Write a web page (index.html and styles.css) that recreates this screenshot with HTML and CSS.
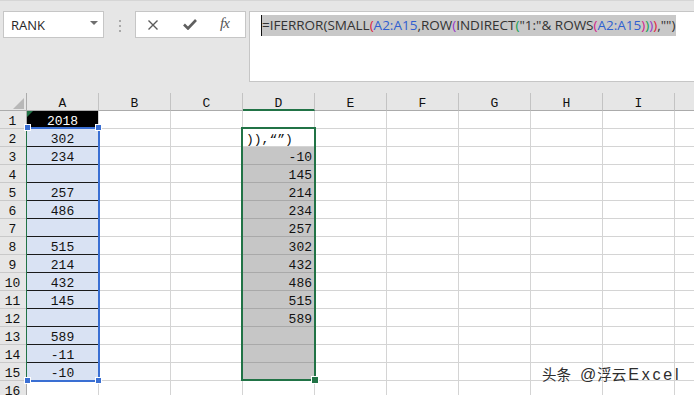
FILE: index.html
```
<!DOCTYPE html>
<html>
<head>
<meta charset="utf-8">
<link rel="stylesheet" href="styles.css">
</head>
<body>
<div class="toolbar">
  <div class="namebox"><span class="name">RANK</span><span class="caret"></span></div>
  <div class="dots"><i></i><i></i><i></i></div>
  <div class="btns">
    <svg class="ico-x" width="10" height="10" viewBox="0 0 10 10"><path d="M0.5 0.5L9.5 9.5M9.5 0.5L0.5 9.5" stroke="#5a5a5a" stroke-width="1.4" fill="none"/></svg>
    <svg class="ico-ok" width="14" height="11" viewBox="0 0 14 11"><path d="M1 5.5L5 9.5L13 1" stroke="#5f5f5f" stroke-width="2.6" fill="none"/></svg>
    <span class="fx">fx</span>
  </div>
  <div class="fbar"><span class="sel"><span class="cur"></span>=IFERROR(SMALL<span class="p1">(</span><span class="r">A2:A15</span>,ROW<span class="p2">(</span>INDIRECT<span class="p3">(</span>"1:"&amp; ROWS<span class="p4">(</span><span class="r">A2:A15</span><span class="p4">)</span><span class="p3">)</span><span class="p2">)</span><span class="p1">)</span>,"")</span></div>
</div>
<div class="sheet">
  <div class="corner"><i></i></div><div class="ch">A</div><div class="ch">B</div><div class="ch">C</div><div class="ch dsel">D</div><div class="ch">E</div><div class="ch">F</div><div class="ch">G</div><div class="ch">H</div><div class="ch">I</div><div class="ch j"></div>

  <div class="rh">1</div><div class="c a1">2018</div><div class="c"></div><div class="c"></div><div class="c"></div><div class="c"></div><div class="c"></div><div class="c"></div><div class="c"></div><div class="c"></div><div class="c j"></div>
  <div class="rh">2</div><div class="c a">302</div><div class="c"></div><div class="c"></div><div class="c d2">)),“”)</div><div class="c"></div><div class="c"></div><div class="c"></div><div class="c"></div><div class="c"></div><div class="c j"></div>
  <div class="rh">3</div><div class="c a">234</div><div class="c"></div><div class="c"></div><div class="c d">-10</div><div class="c"></div><div class="c"></div><div class="c"></div><div class="c"></div><div class="c"></div><div class="c j"></div>
  <div class="rh">4</div><div class="c a"></div><div class="c"></div><div class="c"></div><div class="c d">145</div><div class="c"></div><div class="c"></div><div class="c"></div><div class="c"></div><div class="c"></div><div class="c j"></div>
  <div class="rh">5</div><div class="c a">257</div><div class="c"></div><div class="c"></div><div class="c d">214</div><div class="c"></div><div class="c"></div><div class="c"></div><div class="c"></div><div class="c"></div><div class="c j"></div>
  <div class="rh">6</div><div class="c a">486</div><div class="c"></div><div class="c"></div><div class="c d">234</div><div class="c"></div><div class="c"></div><div class="c"></div><div class="c"></div><div class="c"></div><div class="c j"></div>
  <div class="rh">7</div><div class="c a"></div><div class="c"></div><div class="c"></div><div class="c d">257</div><div class="c"></div><div class="c"></div><div class="c"></div><div class="c"></div><div class="c"></div><div class="c j"></div>
  <div class="rh">8</div><div class="c a">515</div><div class="c"></div><div class="c"></div><div class="c d">302</div><div class="c"></div><div class="c"></div><div class="c"></div><div class="c"></div><div class="c"></div><div class="c j"></div>
  <div class="rh">9</div><div class="c a">214</div><div class="c"></div><div class="c"></div><div class="c d">432</div><div class="c"></div><div class="c"></div><div class="c"></div><div class="c"></div><div class="c"></div><div class="c j"></div>
  <div class="rh">10</div><div class="c a">432</div><div class="c"></div><div class="c"></div><div class="c d">486</div><div class="c"></div><div class="c"></div><div class="c"></div><div class="c"></div><div class="c"></div><div class="c j"></div>
  <div class="rh">11</div><div class="c a">145</div><div class="c"></div><div class="c"></div><div class="c d">515</div><div class="c"></div><div class="c"></div><div class="c"></div><div class="c"></div><div class="c"></div><div class="c j"></div>
  <div class="rh">12</div><div class="c a"></div><div class="c"></div><div class="c"></div><div class="c d">589</div><div class="c"></div><div class="c"></div><div class="c"></div><div class="c"></div><div class="c"></div><div class="c j"></div>
  <div class="rh">13</div><div class="c a">589</div><div class="c"></div><div class="c"></div><div class="c d"></div><div class="c"></div><div class="c"></div><div class="c"></div><div class="c"></div><div class="c"></div><div class="c j"></div>
  <div class="rh">14</div><div class="c a">-11</div><div class="c"></div><div class="c"></div><div class="c d"></div><div class="c"></div><div class="c"></div><div class="c"></div><div class="c"></div><div class="c"></div><div class="c j"></div>
  <div class="rh">15</div><div class="c a">-10</div><div class="c"></div><div class="c"></div><div class="c d"></div><div class="c"></div><div class="c"></div><div class="c"></div><div class="c"></div><div class="c"></div><div class="c j"></div>
  <div class="rh">16</div><div class="c"></div><div class="c"></div><div class="c"></div><div class="c"></div><div class="c"></div><div class="c"></div><div class="c"></div><div class="c"></div><div class="c"></div><div class="c j"></div>

  <div class="range-blue"></div>
  <div class="hb tl"></div><div class="hb tr"></div><div class="hb bl"></div><div class="hb br"></div>
  <div class="range-green"></div>
  <div class="hg"></div>
</div>
<div class="watermark"><span class="cjk">头条</span><span class="at">@</span><span class="cjk">浮云</span><span class="lat">Excel</span></div>
</body>
</html>
```
FILE: styles.css
```
html, body {
  margin: 0;
  padding: 0;
  width: 694px;
  height: 395px;
  overflow: hidden;
  background: #fff;
}
body {
  position: relative;
  font-family: "Liberation Mono", monospace;
}
.toolbar {
  box-sizing: border-box;
  height: 93px;
  background: #e6e6e6;
  border-top: 1px solid #d6d6d6;
  padding: 10px 0 0 3px;
  display: flex;
  align-items: flex-start;
}
.namebox {
  box-sizing: border-box;
  width: 101px;
  height: 27px;
  background: #fff;
  border: 1px solid #c6c6c6;
  display: flex;
  align-items: center;
  justify-content: space-between;
  padding: 0 5px 0 7px;
}
.name {
  font-family: "Open Sans", sans-serif;
  font-size: 13px;
  color: #262626;
}
.caret {
  width: 0;
  height: 0;
  border-left: 4px solid transparent;
  border-right: 4px solid transparent;
  border-top: 4px solid #6f6f6f;
  margin-bottom: 3px;
}
.dots {
  margin: 9px 0 0 15px;
  width: 2px;
  display: flex;
  flex-direction: column;
  gap: 3px;
}
.dots i {
  display: block;
  width: 2px;
  height: 2px;
  background: #a9a9a9;
}
.btns {
  box-sizing: border-box;
  margin-left: 14px;
  width: 111px;
  height: 27px;
  background: #fff;
  border: 1px solid #c6c6c6;
  display: flex;
  align-items: center;
  padding-left: 12px;
}
.ico-x { margin-right: 25px; }
.ico-ok { margin-right: 23px; }
.fx {
  font-family: "Liberation Serif", serif;
  font-style: italic;
  font-size: 15px;
  color: #555;
  letter-spacing: -1px;
  margin-top: -2px;
}
.fbar {
  box-sizing: border-box;
  margin-left: 3px;
  flex: 1;
  height: 71px;
  background: #fff;
  border: 1px solid #c6c6c6;
  border-right: none;
  padding: 3px 0 0 11px;
}
.sel {
  display: inline-block;
  position: relative;
  background: #c8c8c8;
  height: 21px;
  line-height: 21px;
  padding-left: 1px;
  padding-right: 1px;
  font-family: "Open Sans", sans-serif;
  font-size: 13.5px;
  color: #333;
  white-space: nowrap;
}
.cur {
  display: inline-block;
  width: 1px;
  height: 21px;
  background: #111;
  vertical-align: top;
  margin-left: -1px;
}
.r { color: #2f5fd0; }
.p1 { color: #e0213a; }
.p2 { color: #9a35c8; }
.p3 { color: #13a04e; }
.p4 { color: #d4188a; }

.sheet {
  position: relative;
  display: grid;
  grid-template-columns: 27px repeat(9, 72px) 21px;
  grid-auto-rows: 18px;
  height: 302px;
  overflow: hidden;
  background: #fff;
}
.sheet > div {
  box-sizing: border-box;
  font-size: 13px;
  line-height: 22px;
  white-space: nowrap;
  color: #111;
}
.corner {
  background: #e6e6e6;
  border-right: 1px solid #ababab;
  border-bottom: 1px solid #ababab;
  display: flex;
  justify-content: flex-end;
  align-items: flex-end;
  padding: 0 2px 1px 0;
}
.corner i {
  display: block;
  width: 0;
  height: 0;
  border-left: 11px solid transparent;
  border-bottom: 11px solid #b8b8b8;
}
.ch {
  background: #e6e6e6;
  border-right: 1px solid #c3c3c3;
  border-bottom: 1px solid #ababab;
  text-align: center;
  color: #222;
}
.ch.dsel {
  border-bottom: 2px solid #217346;
}
.ch.j { border-right: none; }
.rh {
  background: #e6e6e6;
  border-right: 1px solid #ababab;
  border-bottom: 1px solid #c9c9c9;
  text-align: center;
  padding-right: 1px;
  color: #222;
}
.c {
  border-right: 1px solid #d4d4d4;
  border-bottom: 1px solid #d4d4d4;
}
.c.j { border-right: none; }
.a1 {
  position: relative;
  background: #000;
  color: #fff !important;
  text-align: center;
}
.a1::before {
  content: "";
  position: absolute;
  left: 0;
  top: 0;
  border-top: 6px solid #217346;
  border-right: 6px solid transparent;
}
.a {
  background: #d9e2f3;
  border-bottom: 1px solid #1a1a1a;
  text-align: center;
}
.d2 {
  background: #fff;
  padding-left: 3px;
}
.d {
  background: #c6c6c6;
  border-bottom: 1px solid #a9a9a9;
  text-align: right;
  padding-right: 2px;
}
.range-blue {
  position: absolute;
  left: 26px;
  top: 34px;
  width: 74px;
  height: 255px;
  box-sizing: border-box;
  border: 2px solid #3a6fd3;
  border-left: 1px solid #217346;
}
.hb {
  position: absolute;
  width: 7px;
  height: 7px;
  box-sizing: border-box;
  background: #3a6fd3;
  border: 1px solid #fff;
}
.hb.tl { left: 24px; top: 31px; }
.hb.tr { left: 95px; top: 31px; }
.hb.bl { left: 24px; top: 284px; }
.hb.br { left: 95px; top: 284px; }
.range-green {
  position: absolute;
  left: 241px;
  top: 34px;
  width: 75px;
  height: 254px;
  box-sizing: border-box;
  border: 2px solid #217346;
}
.hg {
  position: absolute;
  left: 311px;
  top: 283px;
  width: 8px;
  height: 8px;
  box-sizing: border-box;
  background: #217346;
  border: 1px solid #fff;
}
.watermark {
  position: absolute;
  left: 542px;
  top: 363px;
  display: flex;
  align-items: baseline;
  color: #2e2e2e;
  text-shadow: 0 0 2px #fff, 0 0 1px #fff;
  white-space: nowrap;
}
.watermark .cjk {
  font-family: "Noto Sans CJK SC", sans-serif;
  font-size: 14.5px;
}
.watermark .at {
  font-family: "Liberation Sans", sans-serif;
  font-size: 16px;
  margin: 0 1px 0 9px;
}
.watermark .lat {
  font-family: "Liberation Sans", sans-serif;
  font-size: 16px;
  letter-spacing: 2.8px;
  margin-left: 2px;
}
```
